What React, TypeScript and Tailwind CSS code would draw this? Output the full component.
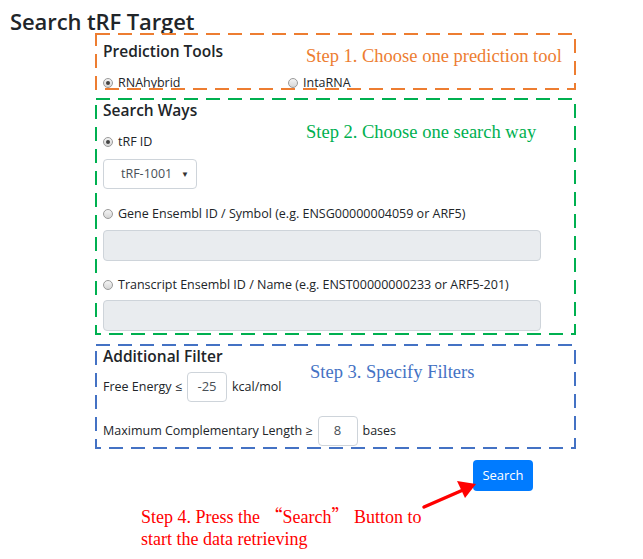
const UI_FONT = "font-['Open_Sans','Noto_Sans',sans-serif]"

function DashedFrame({ w, h, color }: { w: number; h: number; color: string }) {
  return (
    <svg className="absolute left-0 top-0 pointer-events-none" width={w} height={h}>
      <rect
        x={1}
        y={1}
        width={w - 2}
        height={h - 2}
        fill="none"
        stroke={color}
        strokeWidth={2}
        strokeDasharray="14 8"
      />
    </svg>
  )
}

function Radio({ checked }: { checked?: boolean }) {
  return (
    <span className="inline-flex w-[10px] h-[10px] rounded-full border border-[#9a9a9a] bg-gradient-to-b from-[#f4f4f4] to-[#d6d6d6] items-center justify-center shrink-0">
      {checked && <span className="w-[4px] h-[4px] rounded-full bg-[#444]" />}
    </span>
  )
}

function NumBox({ value }: { value: string }) {
  return (
    <div className="w-[40px] h-[30px] rounded-[4px] border border-[#ced4da] bg-white flex items-center justify-center text-[13px] text-[#495057]">
      {value}
    </div>
  )
}

export default function App() {
  return (
    <div className={`relative w-[643px] h-[559px] bg-white text-[#212529] ${UI_FONT}`}>
      <h1 className="pl-[10px] pt-[7px] h-[33px] text-[22px] font-semibold leading-[28px] tracking-[-0.1px]">
        Search tRF Target
      </h1>

      {/* step 1 */}
      <div className="relative ml-[95px] w-[481px] h-[57px] pl-[8px] pt-[6px]">
        <DashedFrame w={481} h={57} color="#ed7d31" />
        <div className="text-[15.5px] font-semibold leading-[24px]">Prediction Tools</div>
        <div className="mt-[11px] flex items-center h-[18px] text-[12.5px] leading-[18px]">
          <label className="flex items-center gap-[5px] w-[185px]">
            <Radio checked />
            <span>RNAhybrid</span>
          </label>
          <label className="flex items-center gap-[5px]">
            <Radio />
            <span>IntaRNA</span>
          </label>
        </div>
      </div>

      {/* step 2 */}
      <div className="relative ml-[95px] mt-[8px] w-[481px] h-[237px] pl-[8px]">
        <DashedFrame w={481} h={237} color="#00b050" />
        <div className="text-[15.5px] font-semibold leading-[24px]">Search Ways</div>
        <label className="mt-[11px] flex items-center gap-[5px] h-[18px] text-[12.5px]">
          <Radio checked />
          <span>tRF ID</span>
        </label>
        <div className="mt-[8px] w-[94px] h-[30px] rounded-[4px] border border-[#ced4da] bg-white flex items-center justify-between pl-[17px] pr-[7px] text-[12.5px] text-[#495057]">
          <span>tRF-1001</span>
          <span className="text-[8px] text-[#333]">▼</span>
        </div>
        <label className="mt-[16px] flex items-center gap-[5px] h-[18px] text-[12.5px]">
          <Radio />
          <span>Gene Ensembl ID / Symbol (e.g. ENSG00000004059 or ARF5)</span>
        </label>
        <div className="mt-[7px] w-[438px] h-[31px] rounded-[4px] border border-[#ced4da] bg-[#e9ecef]" />
        <label className="mt-[15px] flex items-center gap-[5px] h-[18px] text-[12.5px]">
          <Radio />
          <span>Transcript Ensembl ID / Name (e.g. ENST00000000233 or ARF5-201)</span>
        </label>
        <div className="mt-[6px] w-[438px] h-[31px] rounded-[4px] border border-[#ced4da] bg-[#e9ecef]" />
      </div>

      {/* step 3 */}
      <div className="relative ml-[95px] mt-[9px] w-[481px] h-[105px] pl-[8px]">
        <DashedFrame w={481} h={105} color="#4472c4" />
        <div className="text-[15.5px] font-semibold leading-[24px]">Additional Filter</div>
        <div className="mt-[4px] flex items-center gap-[5px] text-[12.5px]">
          <span>Free Energy ≤</span>
          <NumBox value="-25" />
          <span>kcal/mol</span>
        </div>
        <div className="mt-[14px] flex items-center gap-[5px] text-[12.5px]">
          <span>Maximum Complementary Length ≥</span>
          <NumBox value="8" />
          <span>bases</span>
        </div>
      </div>

      <div className="ml-[473px] mt-[11px]">
        <button className="w-[60px] h-[31px] rounded-[4px] bg-[#007bff] text-white text-[13px] leading-none">
          Search
        </button>
      </div>

      {/* annotations */}
      <div className="absolute left-[306px] top-[45px] text-[18.5px] leading-[22px] text-[#ed7d31] font-['Liberation_Serif',serif]">
        Step 1. Choose one prediction tool
      </div>
      <div className="absolute left-[306px] top-[121px] text-[18.5px] leading-[22px] text-[#00b050] font-['Liberation_Serif',serif]">
        Step 2. Choose one search way
      </div>
      <div className="absolute left-[310px] top-[361px] text-[18.5px] leading-[22px] text-[#4472c4] font-['Liberation_Serif',serif]">
        Step 3. Specify Filters
      </div>
      <div className="absolute left-[141px] top-[504px] text-[18px] leading-[22px] text-[#ff0000] font-['Liberation_Serif',serif]">
        <div>
          Step 4. Press the{' '}
          <span className="font-['Noto_Sans_CJK_SC',serif]">“</span>Search
          <span className="font-['Noto_Sans_CJK_SC',serif]">”</span>{' '}Button to
        </div>
        <div>start the data retrieving</div>
      </div>
      <svg className="absolute left-0 top-0 pointer-events-none" width={643} height={559}>
        <line x1={424} y1={507} x2={463} y2={490} stroke="#ff0000" strokeWidth={3.5} strokeLinecap="round" />
        <polygon points="476,484 457,481 465,498" fill="#ff0000" />
      </svg>
    </div>
  )
}
